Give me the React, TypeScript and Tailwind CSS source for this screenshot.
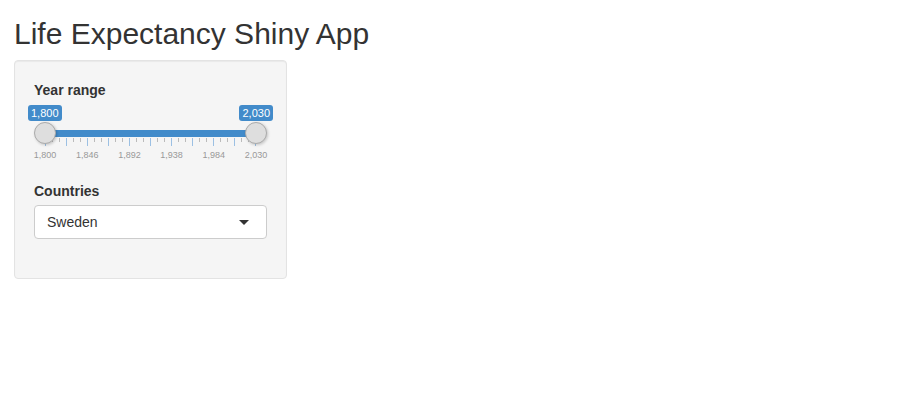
import React from "react";

const gridLabels = ["1,800", "1,846", "1,892", "1,938", "1,984", "2,030"];

// 31 ticks: a blue one every third, small grey ones between
const ticks = Array.from({ length: 31 }, (_, i) => i % 3 === 0);

function Handle() {
  return (
    <div className="z-10 h-[22px] w-[22px] shrink-0 rounded-full border border-[#ababab] bg-[#dedede] shadow-[1px_1px_3px_rgba(0,0,0,0.2)]" />
  );
}

function YearSlider() {
  return (
    <div className="flex w-full flex-col pb-[5px]">
      {/* value badges */}
      <div className="-mx-[6px] flex justify-between">
        <span className="rounded-[3px] bg-[#428bca] px-[3px] py-px text-[11px] leading-[14px] text-white">1,800</span>
        <span className="rounded-[3px] bg-[#428bca] px-[3px] py-px text-[11px] leading-[14px] text-white">2,030</span>
      </div>

      {/* track with handles */}
      <div className="relative mt-px flex h-[22px] items-center justify-between">
        <div className="absolute left-[11px] right-[11px] top-[8px] h-[7px] bg-[#428bca]" />
        <Handle />
        <Handle />
      </div>

      {/* grid ticks */}
      <div className="mx-[11px] -mt-[6px] flex h-[8px] items-start justify-between">
        {ticks.map((big, i) => (
          <div key={i} className={big ? "h-[8px] w-px bg-[#9cc0e3]" : "h-[4px] w-px bg-[#bbbbbb]"} />
        ))}
      </div>

      {/* grid labels */}
      <div className="-mx-[10px] mt-[3px] grid grid-cols-6">
        {gridLabels.map((l) => (
          <span key={l} className="text-center text-[9px] leading-[12px] text-[#999]">
            {l}
          </span>
        ))}
      </div>
    </div>
  );
}

export default function App() {
  return (
    <div className="min-h-[410px] bg-white px-[14px] font-['Liberation_Sans',Arial,sans-serif] text-[#333]">
      <h2 className="mb-[10px] pt-[17px] text-[30px] font-medium leading-[33px]">Life Expectancy Shiny App</h2>

      <div className="w-[273px] rounded-[4px] border border-[#e3e3e3] bg-[#f5f5f5] px-[19px] pt-[19px] pb-[39px] shadow-[inset_0_1px_1px_rgba(0,0,0,0.05)]">
        <div className="flex flex-col">
          <label className="mb-[5px] text-[14px] font-bold leading-5">Year range</label>
          <YearSlider />
        </div>

        <div className="mt-[15px] flex flex-col">
          <label className="mb-[4px] text-[14px] font-bold leading-5">Countries</label>
          <div className="flex h-[34px] items-center justify-between rounded-[4px] border border-[#cccccc] bg-white pl-[12px] pr-[17px] text-[14px]">
            <span>Sweden</span>
            <span className="h-0 w-0 border-x-[5px] border-t-[5px] border-x-transparent border-t-[#333]" />
          </div>
        </div>
      </div>
    </div>
  );
}
